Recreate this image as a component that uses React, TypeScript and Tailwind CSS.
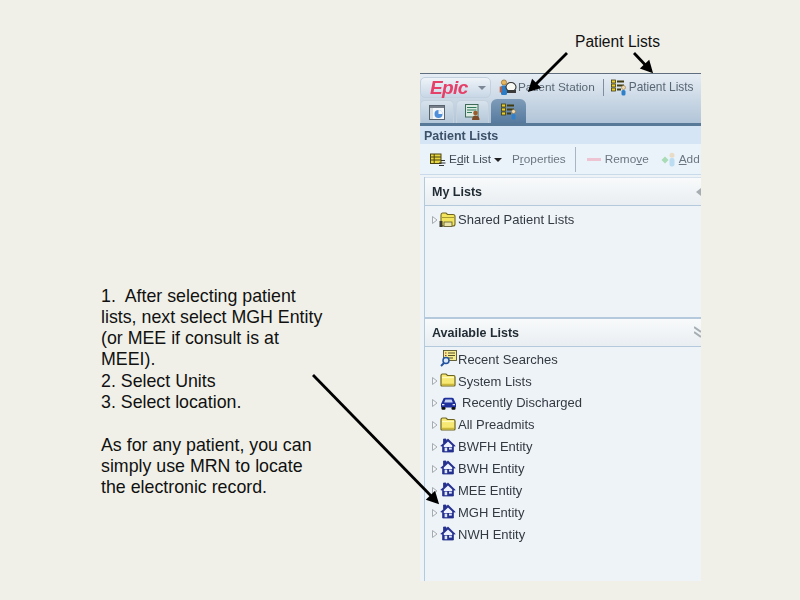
const ARROWS = [
  { x1: 567, y1: 53, x2: 530, y2: 90 },
  { x1: 634, y1: 53, x2: 651, y2: 71 },
  { x1: 313, y1: 375, x2: 437, y2: 502 },
];

// Overlay arrows drawn over the slide
const Arrows = () => (
  <svg className="absolute inset-0 z-10 pointer-events-none" width="800" height="600">
    {ARROWS.map((a) => {
      const angle = Math.atan2(a.y2 - a.y1, a.x2 - a.x1);
      const tipX = a.x2 + Math.cos(angle) * 3;
      const tipY = a.y2 + Math.sin(angle) * 3;
      const wing = (offset: number) =>
        `${tipX - Math.cos(angle + offset) * 14},${tipY - Math.sin(angle + offset) * 14}`;
      return (
        <g key={a.x1}>
          <line x1={a.x1} y1={a.y1} x2={a.x2} y2={a.y2} stroke="#000" strokeWidth="2.8" />
          <polygon points={`${tipX},${tipY} ${wing(0.48)} ${wing(-0.48)}`} fill="#000" />
        </g>
      );
    })}
  </svg>
);

const Caret = () => (
  <svg width="8" height="12" viewBox="0 0 8 12" className="shrink-0">
    <path d="M1.5 2.5 L6 6 L1.5 9.5 Z" fill="#f4f6f8" stroke="#a5abb2" strokeWidth="1" />
  </svg>
);

const Folder = () => (
  <svg width="16" height="14" viewBox="0 0 16 14" className="shrink-0 -translate-y-[1px]">
    <path
      d="M1 12 V3 Q1 1 2.5 1 H6 L7.5 2.5 H13.5 Q15 2.5 15 4 V12 Q15 13 14 13 H2 Q1 13 1 12 Z"
      fill="#f6e873"
      stroke="#6d6420"
      strokeWidth="1.2"
    />
    <path d="M2 4.5 H14" stroke="#fff8b8" strokeWidth="1.4" />
    <path d="M2 11.5 H14" stroke="#cdb93a" strokeWidth="1.5" />
  </svg>
);

const SharedFolder = () => (
  <svg width="17" height="16" viewBox="0 0 17 16" className="shrink-0 -ml-[1px]">
    <path
      d="M2 11 V3 Q2 1 3.5 1 H7 L8.5 2.5 H14 Q16 2.5 16 4.5 V12 Q16 14 14 14 H4 Q2 14 2 12 Z"
      fill="#f3e45e"
      stroke="#6d6420"
      strokeWidth="1.1"
    />
    <path d="M3 5.5 H15" stroke="#a89a2c" strokeWidth="1" />
    <rect x="0.5" y="9" width="3" height="6" fill="#3b3b32" />
    <rect x="5" y="10" width="8" height="4.5" fill="#e9e3a8" stroke="#57532a" strokeWidth="0.8" />
  </svg>
);

const House = () => (
  <svg width="16" height="15" viewBox="0 0 16 15" className="shrink-0 -translate-y-[1px]">
    <path
      d="M0.8 8 L3.5 5.3 V1 H6 V2.8 L8 0.9 L15.2 8 H13.4 V14 H2.6 V8 Z"
      fill="#25308f"
      stroke="#25308f"
      strokeWidth="0.8"
      strokeLinejoin="round"
    />
    <path d="M3.8 7.6 L8 3.5 L12.2 7.6 V9 H3.8 Z" fill="#eef3fd" />
    <rect x="4.6" y="9.6" width="2.6" height="3.6" fill="#dfe8fb" />
    <rect x="9" y="9.6" width="2.8" height="2" fill="#dfe8fb" />
  </svg>
);

const Car = () => (
  <svg width="17" height="13" viewBox="0 0 17 13" className="shrink-0">
    <path d="M1 7 L3.5 1.5 Q4 0.8 5 0.8 H12 Q13 0.8 13.5 1.5 L16 7 V10.5 H1 Z" fill="#1f2f9b" />
    <path d="M4.2 5.4 L5.4 2.4 H11.6 L12.8 5.4 Z" fill="#c7d3f2" />
    <rect x="1.5" y="10" width="4" height="2.8" rx="1" fill="#111" />
    <rect x="11.5" y="10" width="4" height="2.8" rx="1" fill="#111" />
    <rect x="2" y="7" width="2.4" height="1.3" fill="#e5e9fa" />
    <rect x="12.6" y="7" width="2.4" height="1.3" fill="#e5e9fa" />
  </svg>
);

const SearchList = () => (
  <svg width="18" height="17" viewBox="0 0 18 17" className="shrink-0 -translate-y-[1px]">
    <rect x="3.5" y="0.5" width="13" height="10" fill="#f6ec91" stroke="#57532a" strokeWidth="0.9" />
    <path d="M8 3 H15 M8 5.5 H15 M8 8 H13" stroke="#57532a" strokeWidth="1" />
    <path d="M5 3 H6.5 M5 5.5 H6.5" stroke="#a33" strokeWidth="1" />
    <circle cx="6" cy="10.5" r="3" fill="#dbe9f8" stroke="#24539f" strokeWidth="1.5" />
    <path d="M4 13 L1 16" stroke="#24539f" strokeWidth="2" />
  </svg>
);

const ListIcon = () => (
  <svg width="16" height="17" viewBox="0 0 16 17" className="shrink-0">
    <rect x="0.5" y="1" width="4" height="3" fill="#e5cb2e" stroke="#403b10" strokeWidth="0.8" />
    <rect x="0.5" y="5" width="4" height="3" fill="#e5cb2e" stroke="#403b10" strokeWidth="0.8" />
    <rect x="0.5" y="9" width="4" height="3" fill="#e5cb2e" stroke="#403b10" strokeWidth="0.8" />
    <path d="M6 2.5 H13 M6 6.5 H13 M6 10.5 H10" stroke="#403b10" strokeWidth="2" />
    <circle cx="12.5" cy="8.5" r="2" fill="#f3d9a8" stroke="#7a6a4a" strokeWidth="0.5" />
    <rect x="10.5" y="11" width="4" height="5.5" rx="1.5" fill="#2f80c9" />
  </svg>
);

const EditListIcon = () => (
  <svg width="16" height="14" viewBox="0 0 16 14" className="shrink-0">
    <rect x="0.5" y="1" width="10.5" height="9.5" fill="#e8d640" stroke="#4b4413" strokeWidth="1" />
    <path d="M1 4 H11 M1 7 H11 M4.2 1 V10.5" stroke="#4b4413" strokeWidth="1" />
    <path d="M9 10 H15.5 M9 12.5 H14 M11 7.5 H15" stroke="#333" strokeWidth="1" />
  </svg>
);

const StationIcon = () => (
  <svg width="18" height="17" viewBox="0 0 18 17" className="shrink-0">
    <circle cx="5" cy="3.5" r="2.6" fill="#e7b65d" stroke="#7b5a20" strokeWidth="0.6" />
    <rect x="2" y="6.5" width="6" height="9.5" rx="1.5" fill="#2b7cc4" />
    <rect x="0.7" y="7.5" width="2" height="6" fill="#c65e3c" />
    <ellipse cx="12" cy="8" rx="5" ry="4.5" fill="#f8f8f3" stroke="#333" strokeWidth="1.1" />
    <path d="M8 11 H17 V14 H8 Z" fill="#3b3b3b" />
  </svg>
);

const ReportTabIcon = () => (
  <svg width="16" height="15" viewBox="0 0 16 15" className="shrink-0">
    <rect x="0.5" y="0.5" width="15" height="14" fill="#f3f6f9" stroke="#59636d" />
    <rect x="1" y="1" width="14" height="2" fill="#77808a" />
    <rect x="1" y="3" width="3" height="11" fill="#d8dde2" />
    <circle cx="9.5" cy="9" r="4" fill="#4f8fd9" />
    <path d="M9.5 9 V5 A4 4 0 0 1 13.5 9 Z" fill="#f3f6f9" />
  </svg>
);

const PatientTabIcon = () => (
  <svg width="16" height="16" viewBox="0 0 16 16" className="shrink-0">
    <rect x="0.5" y="0.5" width="12.5" height="12.5" fill="#dcebe2" stroke="#3f6a58" />
    <path d="M2 3.5 H11.5 M2 6 H11.5 M2 8.5 H7" stroke="#2f7a5c" strokeWidth="1.2" />
    <circle cx="10.5" cy="9" r="2.3" fill="#9c5a2b" />
    <path d="M7 16 Q7 11.5 10.5 11.5 Q14.5 11.5 14.5 16 Z" fill="#7d4a25" />
  </svg>
);

const AddIcon = () => (
  <svg width="16" height="15" viewBox="0 0 16 15" className="shrink-0">
    <path d="M0.5 8 L4 4.5 L7.5 8 L4 11.5 Z" fill="#a9dcb6" />
    <circle cx="11" cy="3.2" r="2.5" fill="#e9dcc6" />
    <rect x="8.5" y="6" width="5" height="8.5" rx="2" fill="#bcdcf2" />
  </svg>
);

const CollapseArrow = () => (
  <svg width="5" height="8" viewBox="0 0 5 8" className="shrink-0">
    <path d="M0 4 L5 0 V8 Z" fill="#a6adb3" />
  </svg>
);

const ExpandChevrons = () => (
  <svg width="7" height="13" viewBox="0 0 7 13" className="shrink-0">
    <path d="M0 1 L7 6 M0 6 L7 11" stroke="#a6adb3" strokeWidth="2" fill="none" />
  </svg>
);

type Row = { label: string; icon: React.ReactNode; caret?: boolean; gap?: string };

const ROWS: Row[] = [
  { label: "Recent Searches", icon: <SearchList /> },
  { label: "System Lists", icon: <Folder />, caret: true },
  { label: "Recently Discharged", icon: <Car />, caret: true, gap: "ml-[4px]" },
  { label: "All Preadmits", icon: <Folder />, caret: true },
  { label: "BWFH Entity", icon: <House />, caret: true },
  { label: "BWH Entity", icon: <House />, caret: true },
  { label: "MEE Entity", icon: <House />, caret: true },
  { label: "MGH Entity", icon: <House />, caret: true },
  { label: "NWH Entity", icon: <House />, caret: true },
];

const TreeRow = ({ label, icon, caret, gap }: Row) => (
  <div className="flex items-center h-[21.875px] pl-[6px] text-[13px] text-[#333a42] whitespace-nowrap">
    <span className="w-[9px] shrink-0">{caret && <Caret />}</span>
    <span className="w-[18px] shrink-0 flex justify-start">{icon}</span>
    <span className={gap ?? ""}>{label}</span>
  </div>
);

const SectionHeader = ({ title, icon }: { title: string; icon: React.ReactNode }) => (
  <div className="flex items-center justify-between h-[28px] shrink-0 pl-[7px] border-b border-[#b4c9dc] bg-gradient-to-b from-[#f8fafb] to-[#e9eef2]">
    <span className="font-bold text-[12.5px] text-[#1f2a33] pt-[2px]">{title}</span>
    {icon}
  </div>
);

export default function App() {
  return (
    <div
      className="relative w-[800px] h-[600px] overflow-hidden flex bg-[#f0f0e8] text-black"
      style={{ fontFamily: '"Liberation Sans", Arial, sans-serif' }}
    >
      <Arrows />

      {/* Slide text */}
      <div className="w-[420px] shrink-0 pl-[101px] pt-[285.5px] text-[17.8px] leading-[21.3px] text-[#111]">
        <p className="whitespace-pre">1.  After selecting patient</p>
        <p>lists, next select MGH Entity</p>
        <p>(or MEE if consult is at</p>
        <p>MEEI).</p>
        <p>2. Select Units</p>
        <p>3. Select location.</p>
        <p className="mt-[21.3px]">As for any patient, you can</p>
        <p>simply use MRN to locate</p>
        <p>the electronic record.</p>
      </div>

      {/* Screenshot column */}
      <div className="w-[281px] shrink-0 flex flex-col">
        <div className="h-[73px] pt-[32px] pl-[155px] text-[15.6px] leading-[20px] text-[#111] whitespace-nowrap">
          Patient Lists
        </div>

        <div className="h-[508px] flex flex-col overflow-hidden bg-[#eef3f7] blur-[0.35px]">
          {/* Top toolbar and tabs */}
          <div className="h-[53px] shrink-0 flex flex-col border-t border-[#5f6f80] bg-gradient-to-b from-[#e6edf4] to-[#aec2d6]">
            <div className="h-[26px] flex items-center pt-[1px]">
              <div className="w-[71px] h-[21px] shrink-0 flex items-center rounded-[5px] border border-[#c3d1df] bg-gradient-to-b from-[#eef3f8] to-[#c8d7e6]">
                <span className="ml-[9px] w-[38px] italic font-bold text-[19px] leading-none text-[#e63f68] tracking-[-0.6px]">
                  Epic
                </span>
                <span className="ml-[10px] w-0 h-0 border-x-[4px] border-x-transparent border-t-[4px] border-t-[#7c8896]" />
              </div>
              <span className="ml-[8px]">
                <StationIcon />
              </span>
              <span className="ml-[1px] text-[11.8px] text-[#596774]">Patient Station</span>
              <span className="ml-[8px] w-px h-[17px] bg-[#7f8d9c]" />
              <span className="ml-[7px]">
                <ListIcon />
              </span>
              <span className="ml-[2px] text-[11.9px] text-[#596774] whitespace-nowrap">Patient Lists</span>
            </div>
            <div className="h-[23px] flex gap-[2px] items-end">
              <div className="w-[34px] h-[23px] flex items-center justify-center rounded-t-[5px] border border-b-0 border-[#c5d2de] bg-gradient-to-b from-[#d7e2ec] to-[#b4c7d9]">
                <ReportTabIcon />
              </div>
              <div className="w-[33px] h-[23px] flex items-center justify-center rounded-t-[5px] border border-b-0 border-[#c5d2de] bg-gradient-to-b from-[#d7e2ec] to-[#b4c7d9]">
                <PatientTabIcon />
              </div>
              <div className="w-[35px] h-[24px] flex items-center justify-center rounded-t-[6px] bg-gradient-to-b from-[#7f9cb9] to-[#567a9e]">
                <ListIcon />
              </div>
            </div>
            <div className="h-[3px] bg-[#587997]" />
          </div>

          {/* Activity title */}
          <div className="h-[18px] shrink-0 pl-[4px] pt-[2px] flex items-center bg-[#d5e5f5] font-bold text-[12.5px] text-[#3c5168]">
            Patient Lists
          </div>

          {/* Activity toolbar */}
          <div className="h-[31px] shrink-0 flex items-center pl-[10px] pt-[1px] bg-[#ebf3fa] text-[11.8px] text-[#6b7680] whitespace-nowrap border-b border-[#c9dbea]">
            <EditListIcon />
            <span className="ml-[3px] text-[#3f4a55]">
              E<u>d</u>it List
            </span>
            <span className="ml-[3px] w-0 h-0 border-x-[4px] border-x-transparent border-t-[4px] border-t-[#222]" />
            <span className="ml-[10px]">
              P<u>r</u>operties
            </span>
            <span className="ml-[9px] w-px h-[25px] bg-[#a9b6c2]" />
            <span className="ml-[11px] w-[14px] h-[3px] bg-[#efc4d2]" />
            <span className="ml-[4px]">
              Remo<u>v</u>e
            </span>
            <span className="ml-[12px]">
              <AddIcon />
            </span>
            <span className="ml-[2px]">
              <u>A</u>dd
            </span>
          </div>

          {/* Lists */}
          <div className="flex-1 flex flex-col ml-[4px] border-l border-[#b4c9dc] mt-[2px]">
            <div className="h-[142px] shrink-0 flex flex-col border-b-2 border-[#b4c9dc] border-t border-t-[#d5e1ec]">
              <SectionHeader title="My Lists" icon={<CollapseArrow />} />
              <div className="pt-[3px]">
                <div className="flex items-center h-[21.875px] pl-[6px] text-[13px] text-[#333a42] whitespace-nowrap">
                  <span className="w-[9px] shrink-0">
                    <Caret />
                  </span>
                  <span className="w-[18px] shrink-0 flex justify-start">
                    <SharedFolder />
                  </span>
                  <span>Shared Patient Lists</span>
                </div>
              </div>
            </div>
            <SectionHeader title="Available Lists" icon={<ExpandChevrons />} />
            <div className="pt-[1.5px]">
              {ROWS.map((row) => (
                <TreeRow key={row.label} {...row} />
              ))}
            </div>
          </div>
        </div>
      </div>
    </div>
  );
}
